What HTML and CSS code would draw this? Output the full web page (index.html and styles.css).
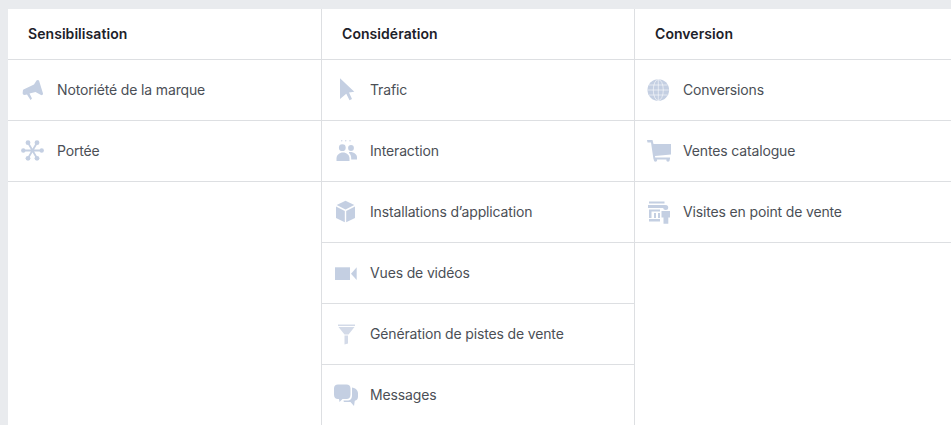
FILE: index.html
```html
<!DOCTYPE html>
<html lang="fr">
<head>
<meta charset="utf-8">
<title>Objectifs</title>
<link rel="stylesheet" href="styles.css">
</head>
<body>
<main class="table">
  <section class="col col-first">
    <h2 class="head">Sensibilisation</h2>
    <ul class="list">
      <li class="row"><span class="ico"><svg viewBox="0 0 26 26"><path d="M2.500 12.500 13 7.500 15.500 3.500C16 2.800 17.500 2.800 18 3.500L22 16.500C22 17.800 21 18.500 20 18L14.500 15 8.500 16.500 11 21.500 9.500 23 6 17.500 3.500 18C2 18 1.500 17 1.700 15.500L2 13Z"/></svg></span>Notoriété de la marque</li>
      <li class="row"><span class="ico"><svg viewBox="0 0 26 26"><g class="lines"><path d="M11.500 12.500 7 4.700M11.500 12.500 16 4.700M11.500 12.500 7 20.300M11.500 12.500 16 20.300M2.500 12.500H20.500"/></g><circle cx="7" cy="4.700" r="2.400"/><circle cx="16" cy="4.700" r="2.400"/><circle cx="7" cy="20.300" r="2.400"/><circle cx="16" cy="20.300" r="2.400"/><circle cx="2.300" cy="12.500" r="2.200"/><circle cx="20.700" cy="12.500" r="2.200"/></svg></span>Portée</li>
    </ul>
  </section>
  <section class="col">
    <h2 class="head">Considération</h2>
    <ul class="list">
      <li class="row"><span class="ico"><svg viewBox="0 0 26 26"><path d="M6 1.300 20.300 14.700 15 15.500 18 22 15.500 23.200 12.300 16.800 6 22Z"/></svg></span>Trafic</li>
      <li class="row"><span class="ico"><svg viewBox="0 0 26 26"><circle class="dot" cx="7.700" cy="2.700" r=".8"/><circle class="dot" cx="11.700" cy="2.700" r=".8"/><circle class="dot" cx="16" cy="2.700" r=".8"/><circle cx="8.300" cy="9.700" r="3.400"/><circle cx="17" cy="10" r="2.900"/><path d="M2.500 23V20.500C2.500 17 5.500 14.500 9 14.500S15.500 17 15.500 20.500V23Z"/><path d="M15 14C20 13.500 23 16.500 23 19V21.500H17.200V20C17.200 18 16.500 16 15 15Z"/></svg></span>Interaction</li>
      <li class="row"><span class="ico"><svg viewBox="0 0 26 26"><path d="M11.500 1.700 20.300 6 11.500 10.500 2.700 6Z"/><path d="M2 7.500 10.800 12V23.300L2 19Z"/><path d="M21 7.500 12.200 12V23.300L21 19Z"/></svg></span>Installations d’application</li>
      <li class="row"><span class="ico"><svg viewBox="0 0 26 26"><rect x="1" y="7.300" width="15" height="12.700"/><path d="M22.700 7.300V20L17 13.700Z"/></svg></span>Vues de vidéos</li>
      <li class="row"><span class="ico"><svg viewBox="0 0 26 26"><path class="soft" d="M4 3.500H21V5H4Z"/><path class="soft" d="M4.500 6H20.500L14.500 13.500H10.500Z"/><path class="soft" d="M10.500 14.500H14V22.500L10.500 23.500Z"/></svg></span>Génération de pistes de vente</li>
      <li class="row"><span class="ico"><svg viewBox="0 0 26 26"><path d="M4 2.500H12.500C15 2.500 16.500 4 16.500 6.500V12.500C16.500 15.500 15 17 12.500 17H8.500L5.500 20 5 17H4C1.500 17 0 15.500 0 12.500V6.500C0 4 1.500 2.500 4 2.500Z"/><path d="M18 5.500C20.500 5.800 24 7.500 24 11.500V14.500C24 17 22.800 18.500 20.800 18.800L20 24 16.500 20H10.800C10 20 9.500 19.500 9.500 18.500H13C16.500 18.500 18 16.500 18 13.500Z"/></svg></span>Messages</li>
    </ul>
  </section>
  <section class="col">
    <h2 class="head">Conversion</h2>
    <ul class="list">
      <li class="row"><span class="ico"><svg viewBox="0 0 26 26"><circle cx="11.300" cy="13" r="10.800"/><g class="cut"><ellipse cx="11.300" cy="13" rx="5" ry="10.500"/><path d="M11.300 2.500V23.500M.8 13H21.800M2 8H20.600M2 18H20.600"/></g></svg></span>Conversions</li>
      <li class="row"><span class="ico"><svg viewBox="0 0 26 26"><path d="M0 2H5.500L6.500 6H24V16.500L8 18 8.200 19.500H23V21.500H6.500L4 4.500H.5Z"/><circle cx="8.500" cy="22" r="1.700"/><circle cx="21" cy="22" r="1.700"/></svg></span>Ventes catalogue</li>
      <li class="row"><span class="ico"><svg viewBox="0 0 26 26"><path d="M2 2.500H17.500V4.500H2ZM1 6H18V9H1ZM2 10.500H13V12.500H4.500V19H2ZM7 14H9V19H7ZM11 14H13V19H11ZM2 20H13V22.500H2Z"/><circle cx="18.700" cy="8.500" r="2.500"/><path d="M14.500 12H23V18.500H21.300V24.700H16.500V18.500H14.500Z"/></svg></span>Visites en point de vente</li>
    </ul>
  </section>
</main>
</body>
</html>
```

FILE: styles.css
```css
* { box-sizing: border-box; }
html, body { height: 100%; overflow: hidden; }
body {
  margin: 0;
  padding: 9px 0 0 8px;
  background: #e9ebee;
  font-family: Inter, "Liberation Sans", Arial, sans-serif;
}
.table {
  display: grid;
  grid-template-columns: 314px 313px 1fr;
  background: #fff;
  min-height: 416px;
}
.col { border-right: 1px solid #dddfe2; }
.col:last-child { border-right: 0; }
.head {
  margin: 0;
  height: 51px;
  padding: 0 0 2px 20px;
  display: flex;
  align-items: center;
  font-size: 14px;
  font-weight: 600;
  letter-spacing: 0.06px;
  color: #1d2129;
  border-bottom: 1px solid #dddfe2;
}
.list { list-style: none; margin: 0; padding: 0; }
.row {
  height: 61px;
  display: flex;
  align-items: center;
  gap: 10px;
  padding: 0 0 2px 12px;
  font-size: 14px;
  letter-spacing: -0.15px;
  color: #4b4f56;
  border-bottom: 1px solid #dddfe2;
}
.col-first .row { padding-left: 13px; }
.ico { width: 26px; height: 26px; margin-top: 2px; flex: none; display: block; }
.ico svg { display: block; width: 26px; height: 26px; fill: #c4cfe2; overflow: visible; }
.ico .lines path { fill: none; stroke: #c4cfe2; stroke-width: 1.800; }
.ico .dot { fill: #d3dae8; }
.ico .soft { fill: #d3dae8; }
.ico .cut ellipse, .ico .cut path { fill: none; stroke: #fff; stroke-width: .7; stroke-opacity: .8; }
```
